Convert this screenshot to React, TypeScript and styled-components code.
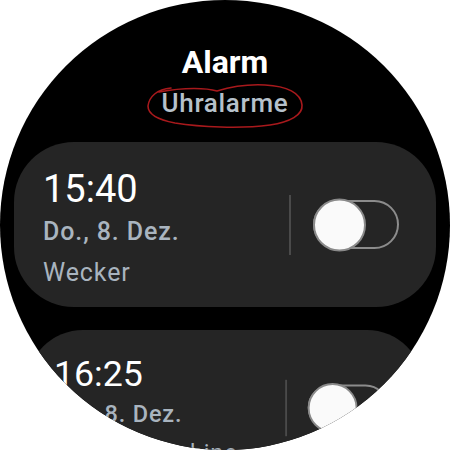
import styled, { createGlobalStyle } from "styled-components";

const GlobalStyle = createGlobalStyle`
  html, body {
    margin: 0;
    padding: 0;
    background: #ffffff;
  }
  body {
    font-family: Roboto, "Noto Sans", sans-serif;
  }
`;

const Watch = styled.div`
  width: 450px;
  height: 450px;
  border-radius: 50%;
  background: #000000;
  overflow: hidden;
  display: flex;
  flex-direction: column;
  align-items: center;
`;

const Header = styled.header`
  padding-top: 43px;
  display: flex;
  flex-direction: column;
  align-items: center;
  gap: 7px;
`;

const Title = styled.h1`
  margin: 0;
  font-size: 32px;
  line-height: 38px;
  font-weight: 700;
  color: #ffffff;
`;

const SubtitleWrap = styled.div`
  position: relative;
`;

const Subtitle = styled.span`
  display: block;
  font-size: 26px;
  line-height: 30px;
  font-weight: 500;
  letter-spacing: 0.7px;
  color: #b6c1cb;
`;

const Scribble = styled.svg`
  position: absolute;
  left: -17px;
  top: -5px;
  width: 160px;
  height: 50px;
  overflow: visible;
  pointer-events: none;
`;

const List = styled.div`
  margin-top: 24px;
  width: 100%;
  display: flex;
  flex-direction: column;
  gap: 23px;
`;

const Card = styled.div<{ $scale?: number }>`
  margin: 0 14px;
  height: 165px;
  box-sizing: border-box;
  flex-shrink: 0;
  border-radius: 60px;
  background: #252525;
  display: flex;
  align-items: center;
  padding: 0 37px 0 29px;
  transform: scale(${(p) => p.$scale ?? 1});
  transform-origin: top center;
`;

const Info = styled.div`
  flex: 1;
  display: flex;
  flex-direction: column;
  padding-top: 6px;
`;

const Time = styled.div`
  font-size: 38px;
  line-height: 44px;
  color: #ffffff;
  margin-bottom: 6px;
`;

const DateLine = styled.div`
  font-size: 25px;
  line-height: 30px;
  font-weight: 500;
  letter-spacing: 0.9px;
  color: #a9b4bf;
  margin-bottom: 11px;
`;

const Label = styled.div`
  font-size: 25px;
  line-height: 30px;
  letter-spacing: 0.9px;
  color: #a9b4bf;
`;

const Divider = styled.div`
  width: 2px;
  height: 60px;
  background: #4a4a4a;
  margin-right: 22px;
`;

const Track = styled.div`
  position: relative;
  width: 86px;
  height: 49px;
  box-sizing: border-box;
  border: 2px solid #8c8c8c;
  border-radius: 25px;
`;

const Knob = styled.div`
  position: absolute;
  left: -2px;
  top: 50%;
  transform: translateY(-50%);
  width: 53px;
  height: 53px;
  box-sizing: border-box;
  border-radius: 50%;
  background: #fafafa;
  border: 2px solid #8a8a8a;
`;

const alarms = [
  { time: "15:40", date: "Do., 8. Dez.", label: "Wecker", scale: 1 },
  { time: "16:25", date: "Do., 8. Dez.", label: "Waschmaschine", scale: 0.94 },
];

export default function App() {
  return (
    <>
      <GlobalStyle />
      <Watch>
        <Header>
          <Title>Alarm</Title>
          <SubtitleWrap>
            <Subtitle>Uhralarme</Subtitle>
            <Scribble viewBox="0 0 160 50">
              <path
                d="M 26 5 C 12 6, 4 14, 3 23 C 3 32, 14 37, 30 40 C 55 44, 95 46, 125 42 C 145 39, 158 32, 157 22 C 156 10, 142 3, 120 2 C 100 1, 85 4, 72 8 C 62 5, 40 4, 14 9"
                fill="none"
                stroke="#a8191c"
                strokeWidth="1.6"
                strokeLinecap="round"
              />
            </Scribble>
          </SubtitleWrap>
        </Header>
        <List>
          {alarms.map((a) => (
            <Card key={a.time} $scale={a.scale}>
              <Info>
                <Time>{a.time}</Time>
                <DateLine>{a.date}</DateLine>
                <Label>{a.label}</Label>
              </Info>
              <Divider />
              <Track>
                <Knob />
              </Track>
            </Card>
          ))}
        </List>
      </Watch>
    </>
  );
}
